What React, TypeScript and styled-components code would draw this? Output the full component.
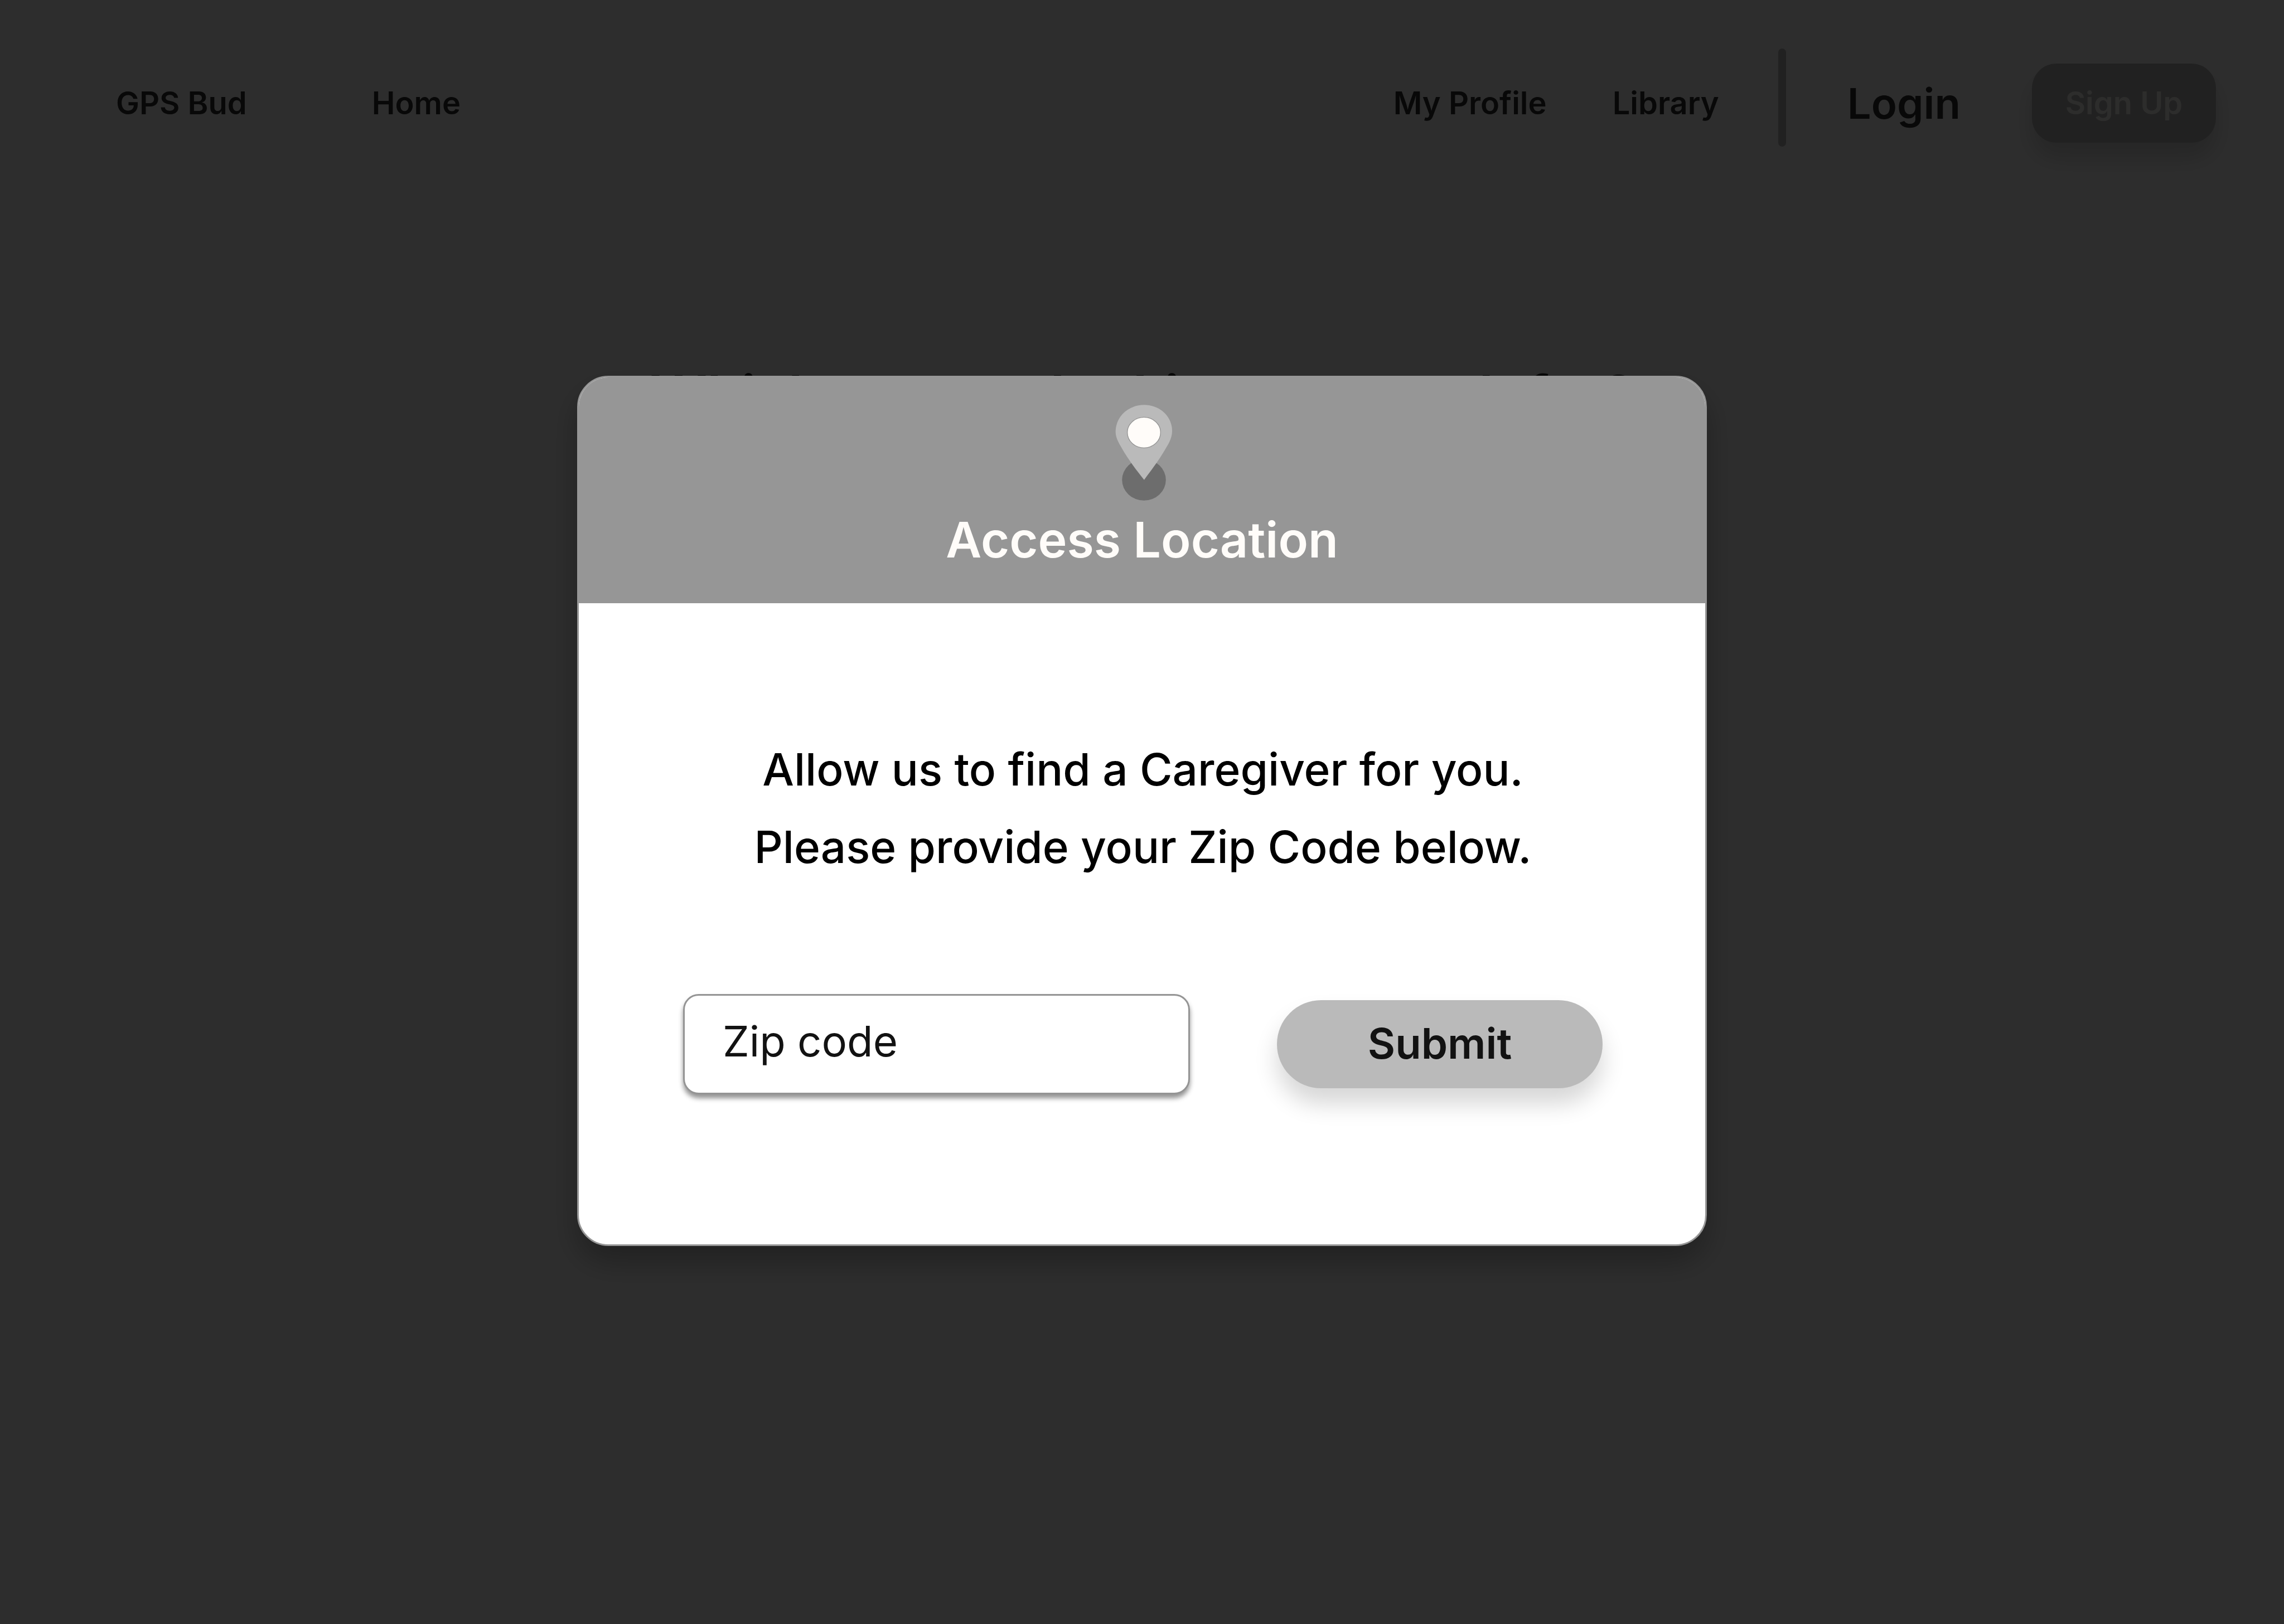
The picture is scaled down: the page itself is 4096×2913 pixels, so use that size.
import React from "react";
import styled, { createGlobalStyle } from "styled-components";

const GlobalStyle = createGlobalStyle`
  *, *::before, *::after { box-sizing: border-box; }
  html, body { margin: 0; padding: 0; background: #fff; }
  body, button, input { font-family: Inter, "Open Sans", "Liberation Sans", sans-serif; }
`;

const Page = styled.div`
  min-height: 100vh;
  background: #fff;
  color: #2d2d2d;
`;

const Header = styled.header`
  display: flex;
  align-items: center;
  justify-content: space-between;
  padding: 87px 122px 0 208px;
`;

const NavGroup = styled.nav<{ $gap: number }>`
  display: flex;
  align-items: center;
  gap: ${(p) => p.$gap}px;
`;

const NavLink = styled.a<{ $large?: boolean }>`
  color: inherit;
  font-size: ${(p) => (p.$large ? 76 : 56)}px;
  font-weight: 600;
  line-height: 96px;
  text-decoration: none;
  white-space: nowrap;
`;

const Account = styled.div`
  display: flex;
  align-items: center;
  gap: 110px;
  margin-left: 106px;
`;

const Divider = styled.span`
  width: 14px;
  height: 176px;
  margin-bottom: 20px;
  border-radius: 7px;
  background: #bababa;
`;

const NavEnd = styled.div`
  display: flex;
  align-items: center;
`;

const AccountActions = styled.div`
  display: flex;
  align-items: center;
  gap: 128px;
`;

const Button = styled.button`
  border: 0;
  background: #bababa;
  font-weight: 600;
  box-shadow: 0 28px 42px rgba(0, 0, 0, 0.16);
  white-space: nowrap;
  cursor: pointer;
`;

const SignUpButton = styled(Button)`
  width: 330px;
  height: 142px;
  padding: 0;
  border-radius: 44px;
  color: #fffcf9;
  font-size: 56px;
`;

const Main = styled.main`
  display: flex;
  justify-content: center;
  padding-top: 371px;
`;

const Question = styled.h1`
  margin: 0;
  font-size: 100px;
  font-weight: 600;
  line-height: 112px;
  text-align: center;
`;

const Overlay = styled.div`
  position: fixed;
  inset: 0;
  display: flex;
  align-items: center;
  justify-content: center;
  padding-bottom: 4px;
  background: rgba(0, 0, 0, 0.824);
`;

const Dialog = styled.section`
  width: 2026px;
  max-width: 96vw;
  overflow: hidden;
  border: 3px solid #969696;
  border-radius: 56px;
  background: #fff;
  box-shadow: 0 28px 56px rgba(0, 0, 0, 0.28);
`;

const DialogHeader = styled.div`
  display: flex;
  flex-direction: column;
  align-items: center;
  gap: 16px;
  padding: 49px 0 60px;
  background: #969696;
`;

const PinIcon = styled.svg`
  display: block;
  width: 107px;
  height: 172px;
`;

const DialogTitle = styled.h2`
  margin: 0;
  color: #fffcf9;
  font-size: 88px;
  font-weight: 600;
  line-height: 108px;
`;

const DialogBody = styled.div`
  padding: 228px 184px 269px 187px;
`;

const Message = styled.p`
  margin: 0;
  color: #000;
  font-size: 80px;
  font-weight: 500;
  line-height: 139px;
  text-align: center;
`;

const ZipForm = styled.form`
  display: flex;
  align-items: center;
  gap: 156px;
  margin-top: 195px;
`;

const HiddenLabel = styled.label`
  position: absolute;
  width: 1px;
  height: 1px;
  overflow: hidden;
  clip-path: inset(50%);
`;

const ZipInput = styled.input`
  flex: 1;
  min-width: 0;
  height: 180px;
  padding: 0 68px 12px;
  border: 3px solid #949494;
  border-radius: 28px;
  outline: 0;
  background: #fff;
  box-shadow: 0 7px 8px #949494;
  color: #121212;
  font-size: 76px;

  &::placeholder {
    color: #121212;
    opacity: 1;
  }
`;

const SubmitButton = styled(Button)`
  width: 584px;
  height: 158px;
  padding: 0 0 4px;
  border-radius: 79px;
  color: #121212;
  font-size: 76px;
`;

function LocationPin() {
  return (
    <PinIcon viewBox="-6 0 113 181" aria-hidden="true">
      <ellipse cx="53.7" cy="142" rx="41.5" ry="39" fill="#6d6d6d" />
      <path
        d="M54 0C84 0 107 22 107 49C107 60 103 69 97 79C86 99 72 118 54 142C36 119 22 101 10 79C4 69 0 60 0 51C0 22 24 0 54 0Z"
        fill="#bababa"
      />
      <ellipse cx="53.7" cy="52.3" rx="31.5" ry="29" fill="#fffcf9" stroke="#949494" strokeWidth="1.4" />
    </PinIcon>
  );
}

export default function App() {
  return (
    <>
      <GlobalStyle />
      <Page>
        <Header>
          <NavGroup $gap={224}>
            <NavLink href="#">GPS Bud</NavLink>
            <NavLink href="#home">Home</NavLink>
          </NavGroup>
          <NavEnd>
            <NavGroup $gap={118}>
              <NavLink href="#profile">My Profile</NavLink>
              <NavLink href="#library">Library</NavLink>
            </NavGroup>
            <Account>
              <Divider />
              <AccountActions>
                <NavLink href="#login" $large>
                  Login
                </NavLink>
                <SignUpButton type="button">Sign Up</SignUpButton>
              </AccountActions>
            </Account>
          </NavEnd>
        </Header>
        <Main>
          <Question>Which are you looking to search for?</Question>
        </Main>
      </Page>
      <Overlay>
        <Dialog role="dialog" aria-modal="true" aria-labelledby="dialog-title">
          <DialogHeader>
            <LocationPin />
            <DialogTitle id="dialog-title">Access Location</DialogTitle>
          </DialogHeader>
          <DialogBody>
            <Message>
              Allow us to find a Caregiver for you.
              <br />
              Please provide your Zip Code below.
            </Message>
            <ZipForm onSubmit={(e) => e.preventDefault()}>
              <HiddenLabel htmlFor="zip">Zip code</HiddenLabel>
              <ZipInput id="zip" type="text" placeholder="Zip code" />
              <SubmitButton type="submit">Submit</SubmitButton>
            </ZipForm>
          </DialogBody>
        </Dialog>
      </Overlay>
    </>
  );
}
